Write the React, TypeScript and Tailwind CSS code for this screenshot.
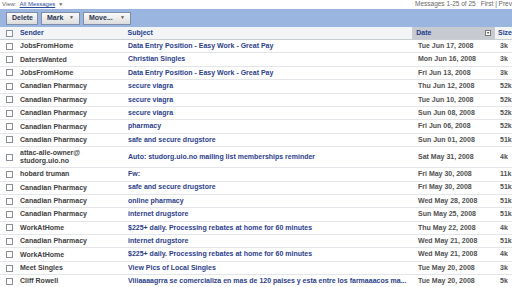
const rows: [string, string, string, string][] = [
  ["JobsFromHome", "Data Entry Position - Easy Work - Great Pay", "Tue Jun 17, 2008", "3k"],
  ["DatersWanted", "Christian Singles", "Mon Jun 16, 2008", "3k"],
  ["JobsFromHome", "Data Entry Position - Easy Work - Great Pay", "Fri Jun 13, 2008", "3k"],
  ["Canadian Pharmacy", "secure viagra", "Thu Jun 12, 2008", "52k"],
  ["Canadian Pharmacy", "secure viagra", "Tue Jun 10, 2008", "52k"],
  ["Canadian Pharmacy", "secure viagra", "Sun Jun 08, 2008", "52k"],
  ["Canadian Pharmacy", "pharmacy", "Fri Jun 06, 2008", "52k"],
  ["Canadian Pharmacy", "safe and secure drugstore", "Sun Jun 01, 2008", "51k"],
  ["attac-alle-owner@\nstudorg.uio.no", "Auto: studorg.uio.no mailing list memberships reminder", "Sat May 31, 2008", "4k"],
  ["hobard truman", "Fw:", "Fri May 30, 2008", "11k"],
  ["Canadian Pharmacy", "safe and secure drugstore", "Fri May 30, 2008", "51k"],
  ["Canadian Pharmacy", "online pharmacy", "Wed May 28, 2008", "51k"],
  ["Canadian Pharmacy", "internet drugstore", "Sun May 25, 2008", "51k"],
  ["WorkAtHome", "$225+ daily. Processing rebates at home for 60 minutes", "Thu May 22, 2008", "4k"],
  ["Canadian Pharmacy", "internet drugstore", "Wed May 21, 2008", "51k"],
  ["WorkAtHome", "$225+ daily. Processing rebates at home for 60 minutes", "Wed May 21, 2008", "4k"],
  ["Meet Singles", "View Pics of Local Singles", "Tue May 20, 2008", "3k"],
  ["Cliff Rowell", "Viiiaaaagrra se comercializa en mas de 120 paises y esta entre los farmaaacos ma...", "Tue May 20, 2008", "5k"],
];

function Box() {
  return <span className="block w-[7px] h-[7px] border border-[#8a8f99] bg-white shrink-0" />;
}

function Btn({ label, menu, w }: { label: string; menu?: boolean; w: string }) {
  return (
    <div className={`${w} h-[13px] flex items-center justify-between px-[5px] border border-[#7f8ea8] bg-gradient-to-b from-[#fbfbfb] to-[#dcdcdc] text-[7px] font-bold text-[#2a3550]`}>
      <span>{label}</span>
      {menu && <span className="text-[5px] text-[#555]">▼</span>}
    </div>
  );
}

export default function App() {
  return (
    <div className="w-[512px] h-[287px] overflow-hidden bg-white font-['Liberation_Sans',Arial,sans-serif]">
      <div className="h-[9px] flex items-start justify-between pl-[2px] text-[6px] text-[#666]">
        <div className="flex gap-[3px] leading-[9px]">
          <span>View:</span>
          <span className="underline text-[#2b4a9a]">All Messages</span>
          <span className="text-[5px]">▼</span>
        </div>
        <div className="flex gap-[5px] leading-[7px] text-[6.5px] whitespace-nowrap">
          <span>Messages 1-25 of 25</span>
          <span>First | Prev</span>
        </div>
      </div>

      <div className="h-[18px] bg-[#9ab5df] flex items-center gap-[3px] px-[6px]">
        <Btn label="Delete" w="w-[32px]" />
        <Btn label="Mark" menu w="w-[39px]" />
        <Btn label="Move..." menu w="w-[48px]" />
      </div>

      <div className="h-[13px] flex items-center bg-[#f3f4f6] border-b border-[#c9cdd4] text-[7px] font-bold text-[#23408a]">
        <div className="w-[18px] flex justify-center pl-[1px]"><Box /></div>
        <div className="w-[108px] pl-[2px]">Sender</div>
        <div className="w-[289px] pl-[2px] border-r border-[#c9cdd4] h-full flex items-center">Subject</div>
        <div className="w-[82px] h-full flex items-center justify-between pl-[3px] pr-[4px] bg-[#c7cad0]">
          <span>Date</span>
          <span className="w-[6px] h-[6px] border border-[#777] bg-white text-[4px] leading-[4px] text-center text-[#555]">▾</span>
        </div>
        <div className="pl-[3px]">Size</div>
      </div>

      {rows.map(([from, subject, date, size], i) => {
        const two = from.includes("\n");
        return (
          <div
            key={i}
            className={`${two ? "h-[21px]" : "h-[13.4px]"} flex items-center border-b border-[#e3e5e8] text-[7px] font-bold whitespace-nowrap`}
          >
            <div className="w-[18px] flex justify-center pl-[1px]"><Box /></div>
            <div className="w-[108px] pl-[2px] text-[#404040] leading-[8px] whitespace-pre">{from}</div>
            <div className="w-[289px] pl-[2px] text-[#2d4189] overflow-hidden">{subject}</div>
            <div className="w-[82px] pl-[3px] text-[#505050]">{date}</div>
            <div className="pl-[3px] text-[#505050]">{size}</div>
          </div>
        );
      })}
    </div>
  );
}
